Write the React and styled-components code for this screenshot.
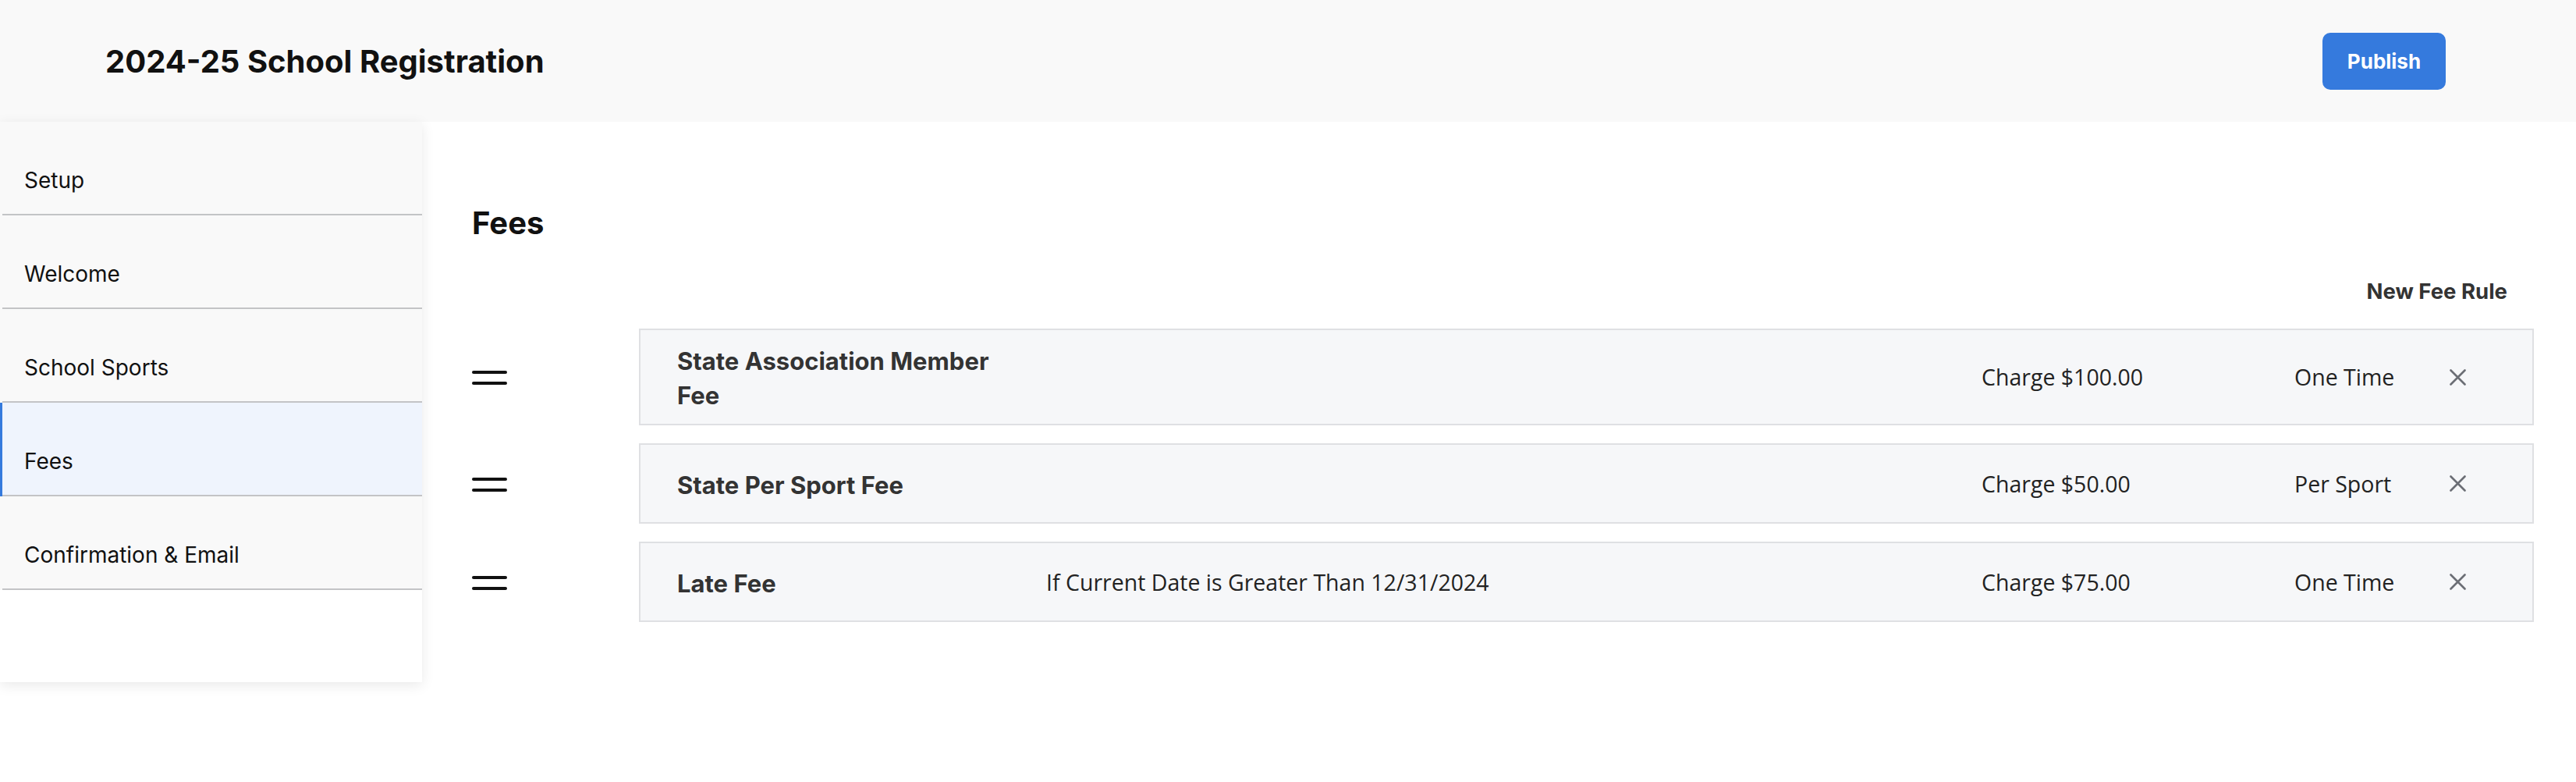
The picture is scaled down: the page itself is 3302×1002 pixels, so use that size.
import React from "react";
import styled, { createGlobalStyle } from "styled-components";

const GlobalStyle = createGlobalStyle`
  body {
    margin: 0;
    background: #ffffff;
    font-family: Inter, Lato, "Noto Sans", sans-serif;
    color: #111111;
  }
  * {
    box-sizing: border-box;
  }
`;

const Page = styled.div`
  width: 3302px;
  min-height: 1002px;
  background: #ffffff;
`;

const Header = styled.header`
  height: 156px;
  background: #f9f9f9;
  display: flex;
  align-items: center;
  justify-content: space-between;
  padding: 0 167px 0 135px;
`;

const Title = styled.h1`
  margin: 0;
  font-size: 40px;
  font-weight: 700;
  color: #111111;
`;

const PublishButton = styled.button`
  width: 158px;
  height: 73px;
  border: none;
  border-radius: 10px;
  background: #357add;
  color: #ffffff;
  font-family: Inter, sans-serif;
  font-size: 26px;
  font-weight: 700;
  cursor: pointer;
`;

const Body = styled.div`
  display: flex;
  align-items: flex-start;
`;

const Sidebar = styled.nav`
  width: 541px;
  height: 718px;
  flex-shrink: 0;
  background: #ffffff;
  box-shadow: 0 4px 16px rgba(0, 0, 0, 0.09);
  display: flex;
  flex-direction: column;
`;

const NavItem = styled.div`
  height: 120px;
  padding: 32px 0 2px 31px;
  display: flex;
  align-items: center;
  font-size: 28px;
  color: #111111;
  background:
    linear-gradient(#c3c4c6, #c3c4c6) no-repeat 3px 100% / calc(100% - 3px) 2px,
    ${(p) => (p.$active ? "#eff4fd" : "#f9f9f9")};
  box-shadow: ${(p) => (p.$active ? "inset 3px 0 0 #357add" : "none")};
`;

const Main = styled.main`
  flex: 1;
  padding: 106px 54px 0 64px;
`;

const Heading = styled.h2`
  margin: 0;
  font-size: 40px;
  line-height: 48px;
  font-weight: 700;
  color: #111111;
`;

const Toolbar = styled.div`
  display: flex;
  justify-content: flex-end;
  padding: 48px 34px 0 0;
`;

const NewRuleButton = styled.button`
  border: none;
  background: none;
  padding: 0;
  font-family: Inter, sans-serif;
  font-size: 27.5px;
  line-height: 31px;
  font-weight: 700;
  color: #333333;
  cursor: pointer;
`;

const FeeList = styled.div`
  display: flex;
  flex-direction: column;
  gap: 23px;
  margin-top: 32px;
`;

const FeeItem = styled.div`
  display: flex;
  align-items: center;
`;

const Handle = styled.div`
  width: 214px;
  flex-shrink: 0;
  display: flex;
  align-items: center;
`;

const FeeRow = styled.div`
  flex: 1;
  min-height: 103px;
  padding: 14px 85px 14px 47px;
  border: 2px solid #dfe0e3;
  background: #f6f7f9;
  display: grid;
  grid-template-columns: 473px 1fr 401px 199px 21px;
  align-items: center;
`;

const FeeName = styled.div`
  font-size: 31px;
  line-height: 44px;
  font-weight: 700;
  color: #333333;
  max-width: 430px;
  padding-top: 4px;
`;

const Cell = styled.div`
  font-family: "Open Sans", sans-serif;
  font-size: 28.5px;
  color: #222222;
`;

const RemoveButton = styled.button`
  border: none;
  background: none;
  padding: 0;
  width: 21px;
  height: 21px;
  display: flex;
  cursor: pointer;
`;

const fees = [
  { name: "State Association Member Fee", rule: "", charge: "Charge $100.00", type: "One Time" },
  { name: "State Per Sport Fee", rule: "", charge: "Charge $50.00", type: "Per Sport" },
  {
    name: "Late Fee",
    rule: "If Current Date is Greater Than 12/31/2024",
    charge: "Charge $75.00",
    type: "One Time",
  },
];

const navItems = ["Setup", "Welcome", "School Sports", "Fees", "Confirmation & Email"];

const DragIcon = () => (
  <svg width="45" height="20" viewBox="0 0 45 20">
    <line x1="2" y1="4" x2="43" y2="4" stroke="#111" strokeWidth="4" strokeLinecap="round" />
    <line x1="2" y1="18" x2="43" y2="18" stroke="#111" strokeWidth="4" strokeLinecap="round" />
  </svg>
);

const CloseIcon = () => (
  <svg width="21" height="21" viewBox="0 0 21 21">
    <path d="M1.5 1.5 L19.5 19.5 M19.5 1.5 L1.5 19.5" stroke="#6b6e75" strokeWidth="2.6" strokeLinecap="round" />
  </svg>
);

const App = () => {
  return (
    <Page>
      <GlobalStyle />
      <Header>
        <Title>2024-25 School Registration</Title>
        <PublishButton>Publish</PublishButton>
      </Header>
      <Body>
        <Sidebar>
          {navItems.map((item) => (
            <NavItem key={item} $active={item === "Fees"}>
              {item}
            </NavItem>
          ))}
        </Sidebar>
        <Main>
          <Heading>Fees</Heading>
          <Toolbar>
            <NewRuleButton>New Fee Rule</NewRuleButton>
          </Toolbar>
          <FeeList>
            {fees.map((fee) => (
              <FeeItem key={fee.name}>
                <Handle>
                  <DragIcon />
                </Handle>
                <FeeRow>
                  <FeeName>{fee.name}</FeeName>
                  <Cell>{fee.rule}</Cell>
                  <Cell>{fee.charge}</Cell>
                  <Cell>{fee.type}</Cell>
                  <RemoveButton>
                    <CloseIcon />
                  </RemoveButton>
                </FeeRow>
              </FeeItem>
            ))}
          </FeeList>
        </Main>
      </Body>
    </Page>
  );
};

export default App;
